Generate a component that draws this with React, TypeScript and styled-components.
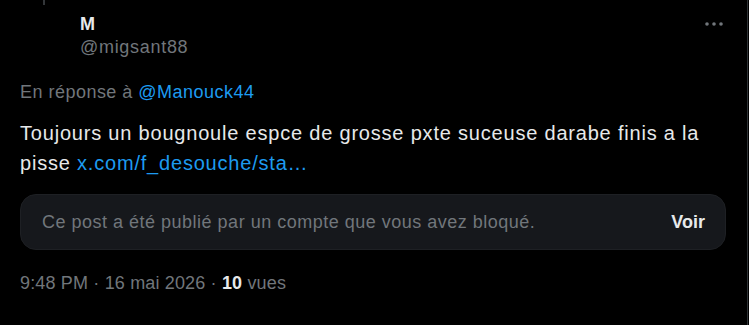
import React from 'react';
import styled, {createGlobalStyle} from 'styled-components';

const GlobalStyle = createGlobalStyle`
  html, body {
    margin: 0;
    padding: 0;
    background: #000;
  }
  body {
    font-family: "Liberation Sans", Arial, sans-serif;
  }
`;

const Page = styled.div`
  width: 748px;
  height: 325px;
  box-sizing: border-box;
  border-right: 1px solid #2f3336;
  background: #000;
  padding: 0 20px 0 20px;
  color: #e7e9ea;
`;

const Header = styled.div`
  display: flex;
  align-items: flex-start;
  gap: 12px;
`;

const AvatarCol = styled.div`
  width: 48px;
  display: flex;
  flex-direction: column;
  align-items: center;
`;

const ThreadLine = styled.div`
  width: 2px;
  height: 5px;
  background: #333639;
`;

const Avatar = styled.div`
  width: 48px;
  height: 48px;
  border-radius: 50%;
  background: #000;
`;

const UserInfo = styled.div`
  flex: 1;
  display: flex;
  flex-direction: column;
  padding-top: 13px;
`;

const Name = styled.span`
  font-weight: 700;
  font-size: 18px;
  line-height: 22px;
  color: #e7e9ea;
`;

const Handle = styled.span`
  font-size: 18px;
  line-height: 24px;
  letter-spacing: 0.7px;
  color: #71767b;
`;

const MoreButton = styled.button`
  background: none;
  border: none;
  padding: 0;
  margin-top: 16px;
  margin-right: 3px;
  width: 20px;
  height: 16px;
  display: flex;
  align-items: center;
  justify-content: center;
`;

const ReplyTo = styled.div`
  margin-top: 22px;
  font-size: 18px;
  line-height: 22px;
  letter-spacing: 0.48px;
  color: #71767b;
`;

const Mention = styled.a`
  color: #1d9bf0;
  text-decoration: none;
`;

const Body = styled.div`
  margin-top: 15px;
  font-size: 20px;
  line-height: 30px;
  letter-spacing: 0.8px;
  color: #e7e9ea;
`;

const BlockedBox = styled.div`
  margin-top: 16px;
  margin-right: 1px;
  height: 56px;
  box-sizing: border-box;
  border-radius: 16px;
  background: #16181c;
  border: 1px solid #1e2024;
  display: flex;
  align-items: center;
  justify-content: space-between;
  padding: 0 20px 0 21px;
`;

const BlockedText = styled.span`
  font-size: 18px;
  letter-spacing: 0.5px;
  color: #71767b;
`;

const ShowButton = styled.span`
  font-size: 18px;
  font-weight: 700;
  color: #e7e9ea;
`;

const Meta = styled.div`
  margin-top: 22px;
  font-size: 18px;
  line-height: 22px;
  letter-spacing: 0.16px;
  color: #71767b;
`;

const Strong = styled.span`
  font-weight: 700;
  color: #e7e9ea;
`;

const Dots = () => (
	<svg width="20" height="8" viewBox="0 0 20 8" fill="#71767b">
		<circle cx="3" cy="4" r="1.8"/>
		<circle cx="10" cy="4" r="1.8"/>
		<circle cx="17" cy="4" r="1.8"/>
	</svg>
);

const App: React.FC = () => (
	<>
		<GlobalStyle/>
		<Page>
			<Header>
				<AvatarCol>
					<ThreadLine/>
					<Avatar/>
				</AvatarCol>
				<UserInfo>
					<Name>M</Name>
					<Handle>@migsant88</Handle>
				</UserInfo>
				<MoreButton aria-label="Plus">
					<Dots/>
				</MoreButton>
			</Header>
			<ReplyTo>
				En réponse à <Mention href="#">@Manouck44</Mention>
			</ReplyTo>
			<Body>
				Toujours un bougnoule espce de grosse pxte suceuse darabe finis a la pisse{' '}
				<Mention href="#">x.com/f_desouche/sta…</Mention>
			</Body>
			<BlockedBox>
				<BlockedText>Ce post a été publié par un compte que vous avez bloqué.</BlockedText>
				<ShowButton>Voir</ShowButton>
			</BlockedBox>
			<Meta>
				9:48 PM · 16 mai 2026 · <Strong>10</Strong> vues
			</Meta>
		</Page>
	</>
);

export default App;
